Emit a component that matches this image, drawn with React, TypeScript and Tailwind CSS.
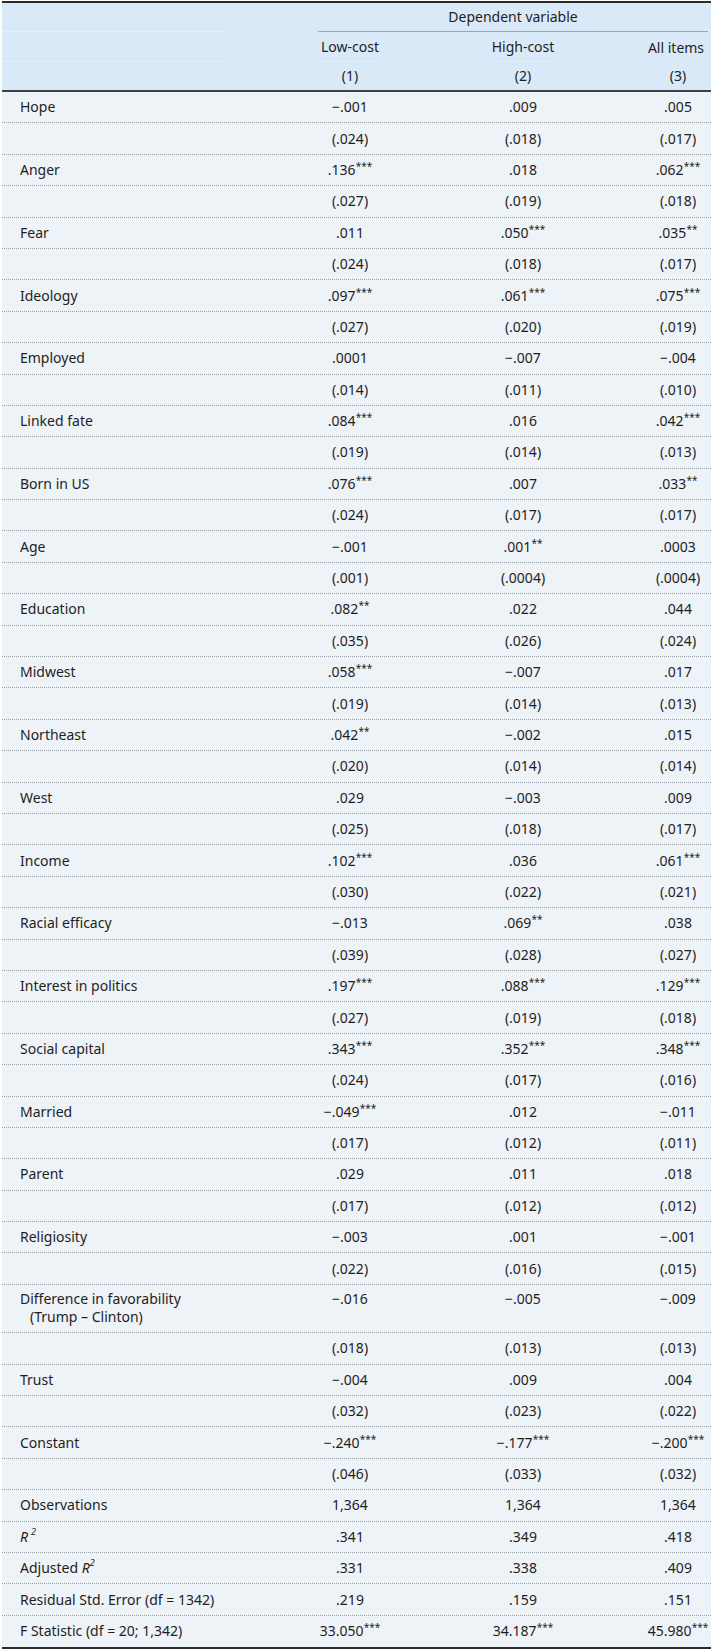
import React from "react";

type Row = { label: React.ReactNode; vals: string[]; tall?: boolean };

const R2 = (
  <span>
    <i>R</i>
    <sup className="relative top-[-1px] ml-[3px] align-top text-[9px] italic leading-none">2</sup>
  </span>
);
const AdjR2 = (
  <span>
    Adjusted <i>R</i>
    <sup className="relative top-[-1px] align-top text-[9px] italic leading-none">2</sup>
  </span>
);
const Diff = (
  <span className="flex flex-col leading-[18px]">
    <span>Difference in favorability</span>
    <span className="pl-[10px]">(Trump – Clinton)</span>
  </span>
);

const rows: Row[] = [
  { label: "Hope", vals: ["−.001", ".009", ".005"] },
  { label: "", vals: ["(.024)", "(.018)", "(.017)"] },
  { label: "Anger", vals: [".136***", ".018", ".062***"] },
  { label: "", vals: ["(.027)", "(.019)", "(.018)"] },
  { label: "Fear", vals: [".011", ".050***", ".035**"] },
  { label: "", vals: ["(.024)", "(.018)", "(.017)"] },
  { label: "Ideology", vals: [".097***", ".061***", ".075***"] },
  { label: "", vals: ["(.027)", "(.020)", "(.019)"] },
  { label: "Employed", vals: [".0001", "−.007", "−.004"] },
  { label: "", vals: ["(.014)", "(.011)", "(.010)"] },
  { label: "Linked fate", vals: [".084***", ".016", ".042***"] },
  { label: "", vals: ["(.019)", "(.014)", "(.013)"] },
  { label: "Born in US", vals: [".076***", ".007", ".033**"] },
  { label: "", vals: ["(.024)", "(.017)", "(.017)"] },
  { label: "Age", vals: ["−.001", ".001**", ".0003"] },
  { label: "", vals: ["(.001)", "(.0004)", "(.0004)"] },
  { label: "Education", vals: [".082**", ".022", ".044"] },
  { label: "", vals: ["(.035)", "(.026)", "(.024)"] },
  { label: "Midwest", vals: [".058***", "−.007", ".017"] },
  { label: "", vals: ["(.019)", "(.014)", "(.013)"] },
  { label: "Northeast", vals: [".042**", "−.002", ".015"] },
  { label: "", vals: ["(.020)", "(.014)", "(.014)"] },
  { label: "West", vals: [".029", "−.003", ".009"] },
  { label: "", vals: ["(.025)", "(.018)", "(.017)"] },
  { label: "Income", vals: [".102***", ".036", ".061***"] },
  { label: "", vals: ["(.030)", "(.022)", "(.021)"] },
  { label: "Racial efficacy", vals: ["−.013", ".069**", ".038"] },
  { label: "", vals: ["(.039)", "(.028)", "(.027)"] },
  { label: "Interest in politics", vals: [".197***", ".088***", ".129***"] },
  { label: "", vals: ["(.027)", "(.019)", "(.018)"] },
  { label: "Social capital", vals: [".343***", ".352***", ".348***"] },
  { label: "", vals: ["(.024)", "(.017)", "(.016)"] },
  { label: "Married", vals: ["−.049***", ".012", "−.011"] },
  { label: "", vals: ["(.017)", "(.012)", "(.011)"] },
  { label: "Parent", vals: [".029", ".011", ".018"] },
  { label: "", vals: ["(.017)", "(.012)", "(.012)"] },
  { label: "Religiosity", vals: ["−.003", ".001", "−.001"] },
  { label: "", vals: ["(.022)", "(.016)", "(.015)"] },
  { label: Diff, vals: ["−.016", "−.005", "−.009"], tall: true },
  { label: "", vals: ["(.018)", "(.013)", "(.013)"] },
  { label: "Trust", vals: ["−.004", ".009", ".004"] },
  { label: "", vals: ["(.032)", "(.023)", "(.022)"] },
  { label: "Constant", vals: ["−.240***", "−.177***", "−.200***"] },
  { label: "", vals: ["(.046)", "(.033)", "(.032)"] },
  { label: "Observations", vals: ["1,364", "1,364", "1,364"] },
  { label: R2, vals: [".341", ".349", ".418"] },
  { label: AdjR2, vals: [".331", ".338", ".409"] },
  { label: "Residual Std. Error (df = 1342)", vals: [".219", ".159", ".151"] },
  { label: "F Statistic (df = 20; 1,342)", vals: ["33.050***", "34.187***", "45.980***"] },
];

function Val({ v }: { v: string }) {
  const m = v.match(/^(.*?)(\**)$/);
  const num = m ? m[1] : v;
  const stars = m ? m[2] : "";
  return (
    <span className="whitespace-nowrap">
      {num}
      {stars && (
        <span className="relative top-[-5px] text-[10px] leading-none">{stars}</span>
      )}
    </span>
  );
}

const grid = "grid grid-cols-[278px_140px_206px_85px]";

export default function App() {
  return (
    <div
      className="bg-white pl-[2px] pr-[2px] pt-[1px] text-[14px] text-[#1e1e1e]"
      style={{ fontFamily: "'Noto Sans', 'Liberation Sans', sans-serif" }}
    >
      <div className="border-t-2 border-b-2 border-[#2b2b2b]">
        {/* header */}
        <div className="border-b-2 border-[#3d4149] bg-[#dae9f8]">
          <div className={`${grid} h-[29px]`}>
            <div className="flex items-end">
              <div className="w-[225px] border-b border-[#e6f0fb]" />
            </div>
            <div className="col-span-3 flex flex-col items-center justify-between pl-[38px] pr-[3px]">
              <div className="pt-[4px] leading-[19px]">Dependent variable</div>
              <div className="w-full border-b border-[#9ea6b0]" />
            </div>
          </div>
          <div className={`${grid} h-[29px]`}>
            <div className="flex items-end">
              <div className="w-[225px] border-b border-[#e6f0fb]" />
            </div>
            <div className="flex items-center justify-center">
              <span className="border-b border-[#e6f0fb] pb-[4px] pt-[4px]">Low-cost</span>
            </div>
            <div className="flex items-center justify-center">
              <span className="border-b border-[#e6f0fb] pb-[4px] pt-[4px]">High-cost</span>
            </div>
            <div className="flex items-center justify-center pl-[15px]">
              <span className="whitespace-nowrap pb-[4px] pt-[4px]">All items</span>
            </div>
          </div>
          <div className={`${grid} h-[29px]`}>
            <div />
            <div className="flex items-center justify-center">(1)</div>
            <div className="flex items-center justify-center">(2)</div>
            <div className="flex items-center justify-center pl-[19px]">(3)</div>
          </div>
        </div>
        {/* body */}
        <div className="bg-[#eef3f8]">
          {rows.map((r, i) => (
            <div
              key={i}
              className={`${grid} ${r.tall ? "h-[48.4px] items-start pt-[5px]" : "h-[31.4px] items-center"} ${
                i < rows.length - 1 ? "border-b border-dotted border-[#9aa0a8]" : ""
              }`}
            >
              <div className="whitespace-nowrap pl-[18px] leading-[18px]">{r.label}</div>
              <div className="flex justify-center leading-[18px]">
                <Val v={r.vals[0]} />
              </div>
              <div className="flex justify-center leading-[18px]">
                <Val v={r.vals[1]} />
              </div>
              <div className="flex justify-center pl-[19px] leading-[18px]">
                <Val v={r.vals[2]} />
              </div>
            </div>
          ))}
        </div>
      </div>
    </div>
  );
}
